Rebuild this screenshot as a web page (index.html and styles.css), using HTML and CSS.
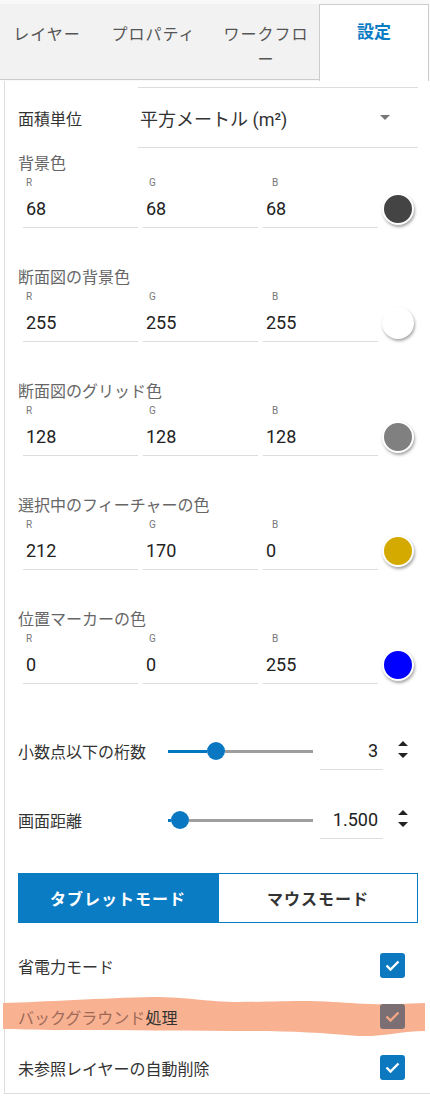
FILE: index.html
```html
<!DOCTYPE html>
<html lang="ja">
<head>
    <meta charset="UTF-8">
    <title>設定</title>
    <link rel="stylesheet" href="styles.css">
</head>
<body>
    <div class="tabs">
        <div class="tab">レイヤー</div>
        <div class="tab">プロパティ</div>
        <div class="tab">ワークフロー</div>
        <div class="tab active">設定</div>
    </div>

    <div class="panel">
        <div class="unit-row">
            <div class="row-label">面積単位</div>
            <div class="select">平方メートル (m²)<span class="caret"></span></div>
        </div>

        <div class="color-group">
            <div class="group-title">背景色</div>
            <div class="rgb-labels"><span>R</span><span>G</span><span>B</span></div>
            <div class="rgb-inputs">
                <input type="text" value="68">
                <input type="text" value="68">
                <input type="text" value="68">
                <span class="swatch" style="background: rgb(68, 68, 68)"></span>
            </div>
        </div>

        <div class="color-group">
            <div class="group-title">断面図の背景色</div>
            <div class="rgb-labels"><span>R</span><span>G</span><span>B</span></div>
            <div class="rgb-inputs">
                <input type="text" value="255">
                <input type="text" value="255">
                <input type="text" value="255">
                <span class="swatch" style="background: rgb(255, 255, 255)"></span>
            </div>
        </div>

        <div class="color-group">
            <div class="group-title">断面図のグリッド色</div>
            <div class="rgb-labels"><span>R</span><span>G</span><span>B</span></div>
            <div class="rgb-inputs">
                <input type="text" value="128">
                <input type="text" value="128">
                <input type="text" value="128">
                <span class="swatch" style="background: rgb(128, 128, 128)"></span>
            </div>
        </div>

        <div class="color-group">
            <div class="group-title">選択中のフィーチャーの色</div>
            <div class="rgb-labels"><span>R</span><span>G</span><span>B</span></div>
            <div class="rgb-inputs">
                <input type="text" value="212">
                <input type="text" value="170">
                <input type="text" value="0">
                <span class="swatch" style="background: rgb(212, 170, 0)"></span>
            </div>
        </div>

        <div class="color-group">
            <div class="group-title">位置マーカーの色</div>
            <div class="rgb-labels"><span>R</span><span>G</span><span>B</span></div>
            <div class="rgb-inputs">
                <input type="text" value="0">
                <input type="text" value="0">
                <input type="text" value="255">
                <span class="swatch" style="background: rgb(0, 0, 255)"></span>
            </div>
        </div>

        <div class="sliders">
            <div class="slider-row">
                <div class="slider-label">小数点以下の桁数</div>
                <div class="slider">
                    <span class="fill" style="width: 39px"></span>
                    <span class="thumb"></span>
                    <span class="rest"></span>
                </div>
                <input class="num" type="text" value="3">
                <svg class="spin" width="12" height="20" viewBox="0 0 12 20">
                    <path d="M1 6 L6 1 L11 6 Z M1 13 L11 13 L6 18 Z" fill="#222"/>
                </svg>
            </div>
            <div class="slider-row">
                <div class="slider-label">画面距離</div>
                <div class="slider">
                    <span class="fill" style="width: 3px"></span>
                    <span class="thumb"></span>
                    <span class="rest"></span>
                </div>
                <input class="num" type="text" value="1.500">
                <svg class="spin" width="12" height="20" viewBox="0 0 12 20">
                    <path d="M1 6 L6 1 L11 6 Z M1 13 L11 13 L6 18 Z" fill="#222"/>
                </svg>
            </div>
        </div>

        <div class="mode-toggle">
            <button class="mode on">タブレットモード</button>
            <button class="mode">マウスモード</button>
        </div>

        <div class="checks">
            <div class="check-row">
                <span class="check-label">省電力モード</span>
                <span class="checkbox">
                    <svg width="25" height="25" viewBox="0 0 25 25"><path d="M6.5 12.5 L10.5 16.5 L18.5 8.5" fill="none" stroke="#fff" stroke-width="2.4"/></svg>
                </span>
            </div>
            <div class="check-row marked">
                <svg class="marker" width="424" height="42" viewBox="0 0 424 42">
                    <path d="M0 8 C40 7, 100 3, 150 2 C185 2, 205 7, 235 7 C275 7, 300 5, 330 7 C350 8, 370 10, 395 9 L422 8 L422 36 C400 36, 380 42, 355 41 C320 38, 290 36, 250 36 C190 36, 120 35, 60 35 C30 35, 10 34, 0 34 Z" fill="#f8b292"/>
                </svg>
                <span class="check-label"><span class="faded">バックグラウンド</span>処理</span>
                <span class="checkbox muted">
                    <svg width="25" height="25" viewBox="0 0 25 25"><path d="M6.5 12.5 L10.5 16.5 L18.5 8.5" fill="none" stroke="#f2a684" stroke-width="2.4"/></svg>
                </span>
            </div>
            <div class="check-row">
                <span class="check-label">未参照レイヤーの自動削除</span>
                <span class="checkbox">
                    <svg width="25" height="25" viewBox="0 0 25 25"><path d="M6.5 12.5 L10.5 16.5 L18.5 8.5" fill="none" stroke="#fff" stroke-width="2.4"/></svg>
                </span>
            </div>
        </div>
    </div>
</body>
</html>
```

FILE: styles.css
```css
body {
    margin: 0;
    background: #fff;
    font-family: Roboto, "Noto Sans CJK JP", sans-serif;
    color: #333;
}
.tabs {
    display: grid;
    grid-template-columns: 94px 119px 106px 1fr;
    padding-top: 4px;
    background: #f9f9f9;
}
.tab {
    height: 76px;
    box-sizing: border-box;
    padding: 17px 10px 0;
    background: #f2f2f2;
    border-bottom: 1px solid #ccc;
    text-align: center;
    font-size: 16px;
    line-height: 25px;
    letter-spacing: 1px;
    color: #555;
    font-family: "Noto Sans CJK JP", sans-serif;
}
.tab.active {
    background: #fff;
    border: 1px solid #ccc;
    border-bottom: none;
    height: 77px;
    padding-top: 13px;
    color: #0a7cc4;
    font-weight: bold;
    font-size: 17px;
    letter-spacing: 0;
    margin-right: 1px;
}
.panel {
    margin-left: 4px;
    padding: 0 12px 0 13px;
    border-left: 1px solid #ddd;
    border-bottom: 1px solid #ddd;
}
.unit-row {
    display: flex;
    align-items: center;
    padding-top: 6px;
}
.row-label {
    width: 120px;
    font-size: 16px;
}
.select {
    flex: 1;
    height: 59px;
    display: flex;
    align-items: center;
    position: relative;
    padding-left: 2px;
    border-top: 1px solid #ddd;
    border-bottom: 1px solid #ddd;
    font-size: 18px;
    color: #333;
}
.caret {
    margin-left: auto;
    margin-right: 28px;
    border-left: 5px solid transparent;
    border-right: 5px solid transparent;
    border-top: 5px solid #777;
}
.color-group {
    margin-top: 40px;
}
.unit-row + .color-group {
    margin-top: 6px;
}
.group-title {
    font-size: 16px;
    line-height: 20px;
    color: #666;
}
.rgb-labels {
    display: flex;
    gap: 5px;
    margin-top: 2px;
    padding-left: 5px;
    font-size: 10px;
    line-height: 14px;
    color: #777;
}
.rgb-labels span {
    width: 115px;
    padding-left: 3px;
}
.rgb-inputs {
    display: flex;
    align-items: center;
    gap: 5px;
    padding-left: 5px;
}
.rgb-inputs input {
    width: 115px;
    height: 38px;
    box-sizing: border-box;
    padding: 0 3px;
    border: none;
    border-bottom: 1px solid #ddd;
    font-family: Roboto, sans-serif;
    font-size: 18px;
    color: #222;
    background: transparent;
    outline: none;
}
.swatch {
    width: 28px;
    height: 28px;
    margin-left: -1px;
    border: 2px solid #fff;
    border-radius: 50%;
    box-shadow: 1px 2px 3px rgba(0, 0, 0, 0.35);
}
.sliders {
    display: flex;
    flex-direction: column;
    gap: 31px;
    margin-top: 48px;
}
.slider-row {
    display: flex;
    align-items: center;
    height: 38px;
}
.slider-label {
    width: 150px;
    font-size: 16px;
}
.slider {
    width: 145px;
    display: flex;
    align-items: center;
}
.fill {
    height: 3px;
    background: #0077c0;
}
.rest {
    flex: 1;
    height: 3px;
    background: #9e9e9e;
}
.thumb {
    width: 18px;
    height: 18px;
    border-radius: 50%;
    background: #0a77c2;
}
.num {
    width: 63px;
    height: 38px;
    box-sizing: border-box;
    margin-left: 7px;
    padding: 0 5px 0 0;
    border: none;
    border-bottom: 1px solid #ddd;
    text-align: right;
    font-family: Roboto, sans-serif;
    font-size: 18px;
    color: #222;
    outline: none;
}
.spin {
    margin-left: 14px;
    margin-top: -3px;
}
.mode-toggle {
    display: flex;
    margin-top: 34px;
}
.mode {
    flex: 1;
    height: 50px;
    border: 1px solid #0a7cc4;
    background: #fff;
    color: #333;
    font-family: "Noto Sans CJK JP", sans-serif;
    font-size: 16px;
    font-weight: bold;
    letter-spacing: 1px;
    cursor: pointer;
}
.mode.on {
    background: #0a7cc4;
    color: #fff;
}
.checks {
    margin-top: 17px;
}
.check-row {
    display: flex;
    align-items: center;
    justify-content: space-between;
    height: 51px;
    position: relative;
}
.check-label {
    font-size: 16px;
    position: relative;
}
.checkbox {
    width: 25px;
    height: 25px;
    margin-right: 13px;
    border-radius: 3px;
    background: #0b78c0;
    position: relative;
}
.checkbox svg {
    display: block;
}
.checkbox.muted {
    background: #7b6f73;
}
.marker {
    position: absolute;
    left: -15px;
    top: 4px;
}
.faded {
    color: #a06a58;
}
```
